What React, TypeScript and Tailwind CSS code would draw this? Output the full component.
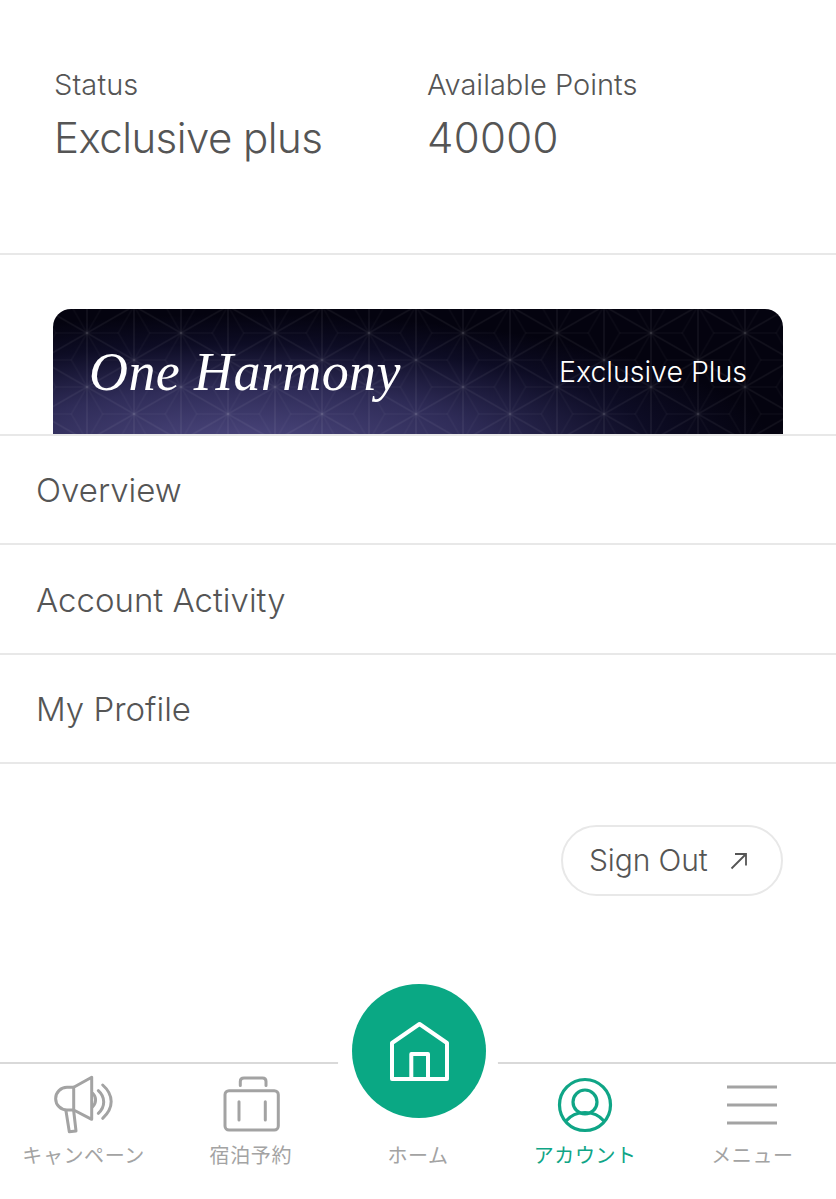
const rows = ["Overview", "Account Activity", "My Profile"];

// asanoha lattice with vertical edges, one 94x54 tile
function asanohaPath() {
  const parts: string[] = [];
  for (let c = -3; c < 5; c++) {
    for (let r = -3; r < 3; r++) {
      const x = 47 * c;
      const y = 54 * r + (Math.abs(c) % 2 === 1 ? 27 : 0);
      for (const dir of [1, -1]) {
        const tipX = x + 47 * dir;
        const tipY = y + 27;
        const cx = (x + x + tipX) / 3;
        const cy = y + 27;
        parts.push(`M${x} ${y}L${x} ${y + 54}L${tipX} ${tipY}Z M${x} ${y}L${cx} ${cy}L${x} ${y + 54} M${cx} ${cy}L${tipX} ${tipY}`);
      }
    }
  }
  return parts.join(" ");
}

function Megaphone() {
  return (
    <svg width="60" height="60" viewBox="0 0 60 60" fill="none" stroke="#a3a3a3" strokeWidth="3" strokeLinejoin="round" strokeLinecap="round">
      <path d="M19.7 12.3 37.7 2.3V44.3L19.7 35Z" />
      <path d="M19.7 12.3H13A11.3 11.3 0 0 0 13 35H19.7" />
      <path d="M12 36 15.3 56.7 22 56 19.7 36" />
      <path d="M38.7 18.3C42.5 22 42.5 28 38.7 31.6" />
      <path d="M44.3 15.7C51.5 22 51.5 32 44.3 38.3" />
      <path d="M48.7 10C60 20 60 33 48.7 43.3" />
    </svg>
  );
}

function Briefcase() {
  return (
    <svg width="60" height="60" viewBox="0 0 60 60" fill="none" stroke="#a3a3a3" strokeWidth="3" strokeLinecap="round">
      <rect x="4" y="15.7" width="53.3" height="39.3" rx="4" />
      <path d="M19.3 10.5V6.5Q19.3 3 23 3H41.5Q45 3 45 6.5V10.5" />
      <path d="M18 26.7V45M44.3 26.7V45" />
    </svg>
  );
}

function House() {
  return (
    <svg width="64" height="64" viewBox="0 0 64 64" fill="none" stroke="#ffffff" strokeWidth="4" strokeLinejoin="round">
      <path d="M5 24 32.5 5 60 24V60H5Z" />
      <path d="M24.3 60V35H41V60" />
    </svg>
  );
}

function Account() {
  return (
    <svg width="56" height="56" viewBox="0 0 56 56" fill="none" stroke="#0fa586" strokeWidth="3.2">
      <circle cx="28" cy="28" r="25.5" />
      <circle cx="28" cy="25" r="12" />
      <path d="M9 44C14 38 20 35.5 28 35.5S42 38 47 44" />
    </svg>
  );
}

function Hamburger() {
  return (
    <svg width="52" height="40" viewBox="0 0 52 40" fill="none" stroke="#a3a3a3" strokeWidth="3">
      <path d="M1 2H51M1 20H51M1 38H51" />
    </svg>
  );
}

function NavItem({ label, icon, active }: { label: string; icon?: React.ReactNode; active?: boolean }) {
  return (
    <div className="flex flex-col items-center">
      <div className="flex h-[60px] items-center justify-center">{icon}</div>
      <span className={`mt-[7px] whitespace-nowrap text-[20px] leading-[28px] tracking-[0.6px] ${active ? "text-[#0fa586]" : "text-[#a3a3a3]"}`}>
        {label}
      </span>
    </div>
  );
}

export default function App() {
  return (
    <div className="relative flex h-[1199px] w-[836px] flex-col overflow-hidden bg-white font-['Inter','Noto_Sans_CJK_JP',sans-serif] text-[#555555]">
      <section className="flex h-[255px] shrink-0 border-b-2 border-[#e8e8e8] pl-[54px] pt-[68px]">
        <div className="w-[373px]">
          <p className="text-[29px] font-light leading-[34px] tracking-[0.1px]">Status</p>
          <p className="mt-[11px] text-[42px] font-light leading-[50px] tracking-[-0.55px]">Exclusive plus</p>
        </div>
        <div>
          <p className="text-[29px] font-light leading-[34px]">Available Points</p>
          <p className="mt-[11px] text-[42px] font-light leading-[50px] tracking-[0.3px]">40000</p>
        </div>
      </section>

      <section className="h-[179px] shrink-0 overflow-hidden px-[53px] pt-[54px]">
        <div className="relative h-[160px] overflow-hidden rounded-t-[18px] bg-[radial-gradient(ellipse_530px_135px_at_190px_140px,#4f4a82_0%,#2f2c58_45%,#0d0c24_78%,#04030f_100%)]">
          <svg className="absolute inset-0 h-full w-full">
            <defs>
              <pattern id="asanoha" width="94" height="54" patternUnits="userSpaceOnUse" patternTransform="translate(10.5 10.5)">
                <path d={asanohaPath()} transform="translate(23.5 13.5)" fill="none" stroke="#ffffff" strokeOpacity="0.05" strokeWidth="1" />
              </pattern>
            </defs>
            <rect width="100%" height="100%" fill="url(#asanoha)" />
          </svg>
          <div className="relative flex h-[125px] items-center justify-between pl-[36px] pr-[36px]">
            <span className="font-['Liberation_Serif',serif] text-[54px] italic leading-none tracking-[0.4px] text-white">One Harmony</span>
            <span className="pt-[2px] text-[28.5px] font-light text-white">Exclusive Plus</span>
          </div>
        </div>
      </section>

      {rows.map((row) => (
        <div key={row} className="flex h-[109.3px] shrink-0 items-center border-t-2 border-[#e8e8e8] pl-[36px] pt-[3px] text-[33px] font-light">
          {row}
        </div>
      ))}
      <div className="flex shrink-0 justify-end border-t-2 border-[#e8e8e8] pr-[53px] pt-[61px]">
        <div className="flex h-[71px] w-[222px] items-center rounded-full border-2 border-[#e8e8e8] pl-[26px] pt-[1px] text-[30px] font-light tracking-[-0.1px]">
          Sign Out
          <svg className="ml-[22px]" width="18" height="18" viewBox="0 0 18 18" fill="none" stroke="#555555" strokeWidth="1.8">
            <path d="M1.5 16.5 16 2M5 2H16V13.5" />
          </svg>
        </div>
      </div>

      <nav className="relative mt-auto grid h-[137px] shrink-0 grid-cols-5 border-t-2 border-[#d9d9d9] pt-[11px]">
        <NavItem label="キャンペーン" icon={<Megaphone />} />
        <NavItem label="宿泊予約" icon={<Briefcase />} />
        <NavItem label="ホーム" />
        <NavItem label="アカウント" icon={<Account />} active />
        <NavItem label="メニュー" icon={<Hamburger />} />
        <div className="absolute left-[338px] top-[-80px] h-[160px] w-[160px] rounded-full bg-white" style={{ clipPath: "inset(0 0 50% 0)" }} />
      </nav>
      <div className="absolute left-[352px] top-[984px] flex h-[134px] w-[134px] items-center justify-center rounded-full bg-[#0aa884]">
        <House />
      </div>
    </div>
  );
}
